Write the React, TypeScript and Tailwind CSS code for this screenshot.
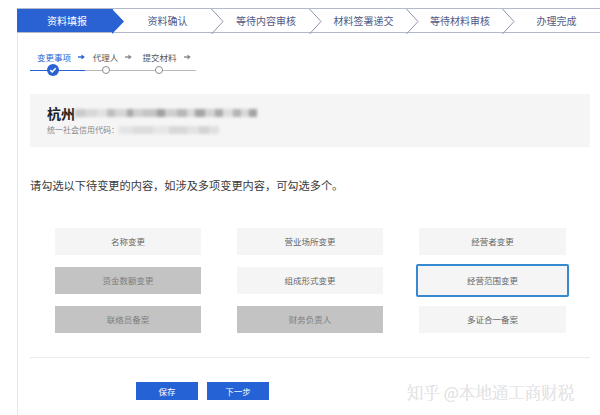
import React from 'react'

const font = { fontFamily: '"Noto Sans CJK SC", "Noto Sans", sans-serif' }

const steps = [
  { label: '资料填报', w: 'w-[96px]', active: true },
  { label: '资料确认', w: 'w-[99px]' },
  { label: '等待内容审核', w: 'w-[98px]' },
  { label: '材料签署递交', w: 'w-[97px]' },
  { label: '等待材料审核', w: 'w-[96px]' },
  { label: '办理完成', w: 'flex-1', last: true },
]

const subSteps = [
  { label: '变更事项', done: true },
  { label: '代理人' },
  { label: '提交材料' },
]

const options = [
  { label: '名称变更' },
  { label: '营业场所变更' },
  { label: '经营者变更' },
  { label: '资金数额变更', disabled: true },
  { label: '组成形式变更' },
  { label: '经营范围变更', selected: true },
  { label: '联络员备案', disabled: true },
  { label: '财务负责人', disabled: true },
  { label: '多证合一备案' },
]

function Chevron({ active }: { active?: boolean }) {
  return (
    <svg className="absolute top-0 -right-[12px] z-10" width="13" height="25" viewBox="0 0 13 25">
      {active ? (
        <polygon points="0,0 12,12.5 0,25" fill="#2a62d4" />
      ) : (
        <polyline points="0.5,0 12,12.5 0.5,25" fill="none" stroke="#8d93ab" strokeWidth="1" />
      )}
    </svg>
  )
}

function Arrow({ color }: { color: string }) {
  return (
    <svg width="7" height="6" viewBox="0 0 7 6" className="absolute left-full top-[3px] ml-[7px]">
      <path d="M0 3h4.5" stroke={color} strokeWidth="1.4" />
      <path d="M3.5 0.6 L6.8 3 L3.5 5.4z" fill={color} />
    </svg>
  )
}

function Blur({ blocks }: { blocks: [number, string][] }) {
  return (
    <div className="flex blur-[1.5px]">
      {blocks.map(([w, c], i) => (
        <div key={i} className="h-[8px]" style={{ width: w, background: c }} />
      ))}
    </div>
  )
}

export default function App() {
  return (
    <div className="w-[600px] h-[415px] bg-white overflow-hidden relative pt-[9px]" style={font}>
      <div className="ml-[17px] h-[406px] flex flex-col">
        {/* step bar */}
        <div className="flex h-[25px] border-t border-b border-[#b4b9cb] -mt-px">
          {steps.map((s) => (
            <div
              key={s.label}
              className={`relative ${s.w} h-full flex items-center justify-center text-[10px] ${
                s.active ? 'bg-[#2a62d4] text-white pl-[4px]' : 'text-[#4e5a85] pl-[10px]'
              }`}
            >
              {s.label}
              {!s.last && <Chevron active={s.active} />}
            </div>
          ))}
        </div>

        <div className="flex-1 border-l border-[#e8e8e8] pl-[12px] pr-[10px]">
          {/* sub steps */}
          <div className="relative w-[170px] ml-[-4px] mt-[18px]">
            <div className="flex h-[12px] items-center">
              {subSteps.map((s, i) => (
                <div key={s.label} className="w-[53px] flex justify-center">
                  <span
                    className={`relative whitespace-nowrap text-[8.5px] leading-[12px] ${
                      s.done ? 'text-[#2a62d4]' : 'text-[#555]'
                    } ${i === 0 ? 'ml-[3px]' : i === 2 ? 'ml-[2px]' : ''}`}
                  >
                    {s.label}
                    <Arrow color={s.done ? '#2a62d4' : '#888'} />
                  </span>
                </div>
              ))}
            </div>
            <div className="relative flex h-[12px] mt-px items-center">
              <div className="absolute left-[4px] right-0 top-[6px] h-px bg-[#b8b8b8]" />
              <div className="absolute left-[4px] w-[55px] top-[6px] h-px bg-[#2a62d4]" />
              {subSteps.map((s) => (
                <div key={s.label} className="w-[53px] flex justify-center relative">
                  {s.done ? (
                    <div className="w-[12px] h-[12px] rounded-full bg-[#2a62d4] flex items-center justify-center">
                      <svg width="8" height="8" viewBox="0 0 8 8">
                        <path d="M1.3 4.1 L3.2 5.9 L6.7 2.2" fill="none" stroke="#fff" strokeWidth="1.5" />
                      </svg>
                    </div>
                  ) : (
                    <div className="w-[8px] h-[8px] rounded-full border-[1.5px] border-[#8c8c8c] bg-white" />
                  )}
                </div>
              ))}
            </div>
          </div>

          {/* company */}
          <div className="mt-[18px] h-[53px] bg-[#f5f5f5] pl-[17px] pt-[10px]">
            <div className="flex items-center h-[18px]">
              <span className="text-[14px] font-bold text-[#222] leading-[18px]">杭州</span>
              <Blur
                blocks={[
                  [10, '#c9c9c9'], [12, '#d8d8d8'], [10, '#e2e2e2'], [8, '#bdbdbd'], [12, '#d6d6d6'],
                  [6, '#a9a9a9'], [10, '#d0d0d0'], [14, '#c4c4c4'], [8, '#9f9f9f'], [12, '#cfcfcf'],
                  [10, '#b7b7b7'], [8, '#dadada'], [10, '#a5a5a5'], [10, '#d3d3d3'], [8, '#ababab'],
                  [10, '#dddddd'], [8, '#b4b4b4'], [8, '#d8d8d8'], [8, '#a2a2a2'],
                ]}
              />
            </div>
            <div className="flex items-center h-[12px] mt-[2px]">
              <span className="text-[8px] text-[#888]">统一社会信用代码：</span>
              <Blur
                blocks={[
                  [14, '#e4e4e4'], [20, '#dcdcdc'], [16, '#e6e6e6'], [18, '#d8d8d8'], [12, '#e2e2e2'],
                  [10, '#d4d4d4'], [10, '#e0e0e0'],
                ]}
              />
            </div>
          </div>

          {/* instruction */}
          <p className="mt-[30px] text-[11.2px] leading-[16px] text-[#3a3a3a]">
            请勾选以下待变更的内容，如涉及多项变更内容，可勾选多个。
          </p>

          {/* options */}
          <div className="mt-[35px] ml-[25px] grid grid-cols-[146px_146px_147px] gap-x-[36px] gap-y-[12px]">
            {options.map((o) => (
              <div
                key={o.label}
                className={`h-[27px] flex items-center justify-center text-[8.5px] ${
                  o.disabled
                    ? 'bg-[#c3c3c3] text-[#7d7d7d]'
                    : o.selected
                    ? 'bg-[#f5f5f5] text-[#666] border-2 border-[#3489d0] rounded-[2px] -mx-[3px] -my-[3px] h-[33px]'
                    : 'bg-[#f5f5f5] text-[#666]'
                }`}
              >
                {o.label}
              </div>
            ))}
          </div>

          <div className="mt-[24px] h-px bg-[#ececec]" />

          <div className="mt-[24px] ml-[106px] flex gap-[9px]">
            <button className="w-[62px] h-[18px] bg-[#2562d6] text-white text-[8.5px] flex items-center justify-center">
              保存
            </button>
            <button className="w-[62px] h-[18px] bg-[#2562d6] text-white text-[8.5px] flex items-center justify-center">
              下一步
            </button>
          </div>
        </div>
      </div>

      <div className="absolute left-[407px] top-[381px] text-[16.5px] leading-[22px] font-light text-[#f0f0f0] [text-shadow:0_0_0.5px_#b0b0b0]">
        知乎 @本地通工商财税
      </div>
    </div>
  )
}
